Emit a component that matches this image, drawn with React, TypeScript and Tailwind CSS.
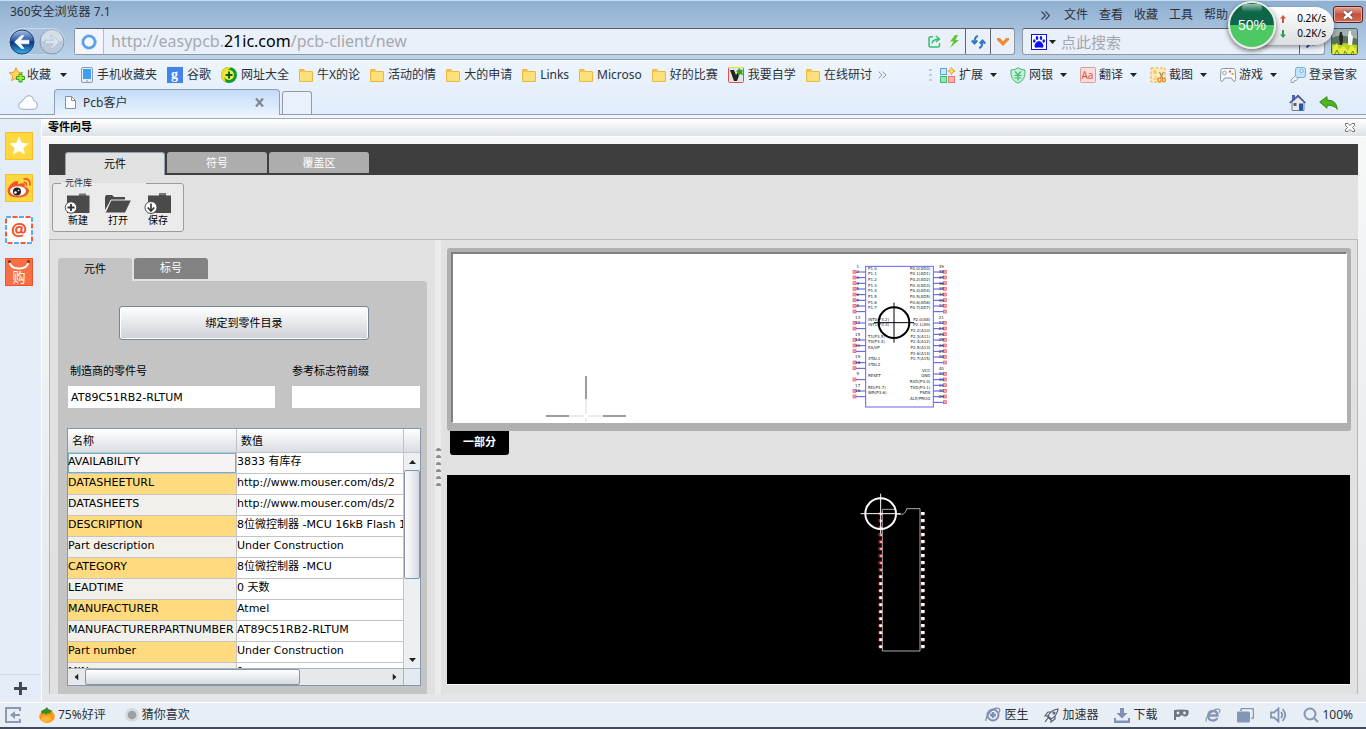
import { ReactNode } from "react";

type childrenProps = {
   children?: ReactNode;
}

const bookmarks = [
   { label: "牛X的论", icon: "folder" },
   { label: "活动的情", icon: "folder" },
   { label: "大的申请", icon: "folder" },
   { label: "Links", icon: "folder" },
   { label: "Microso", icon: "folder" },
   { label: "好的比赛", icon: "folder" },
   { label: "我要自学", icon: "plant" },
   { label: "在线研讨", icon: "folder" },
];

const rows = [
   ["AVAILABILITY", "3833 有库存"],
   ["DATASHEETURL", "http://www.mouser.com/ds/2"],
   ["DATASHEETS", "http://www.mouser.com/ds/2"],
   ["DESCRIPTION", "8位微控制器 -MCU 16kB Flash 1"],
   ["Part description", "Under Construction"],
   ["CATEGORY", "8位微控制器 -MCU"],
   ["LEADTIME", "0 天数"],
   ["MANUFACTURER", "Atmel"],
   ["MANUFACTURERPARTNUMBER", "AT89C51RB2-RLTUM"],
   ["Part number", "Under Construction"],
   ["MIN", "1"],
];

// [label, y]
const leftPins: [string, number][] = [
   ["P1.0", 54], ["P1.1", 71], ["P1.2", 88], ["P1.3", 105], ["P1.4", 122], ["P1.5", 139], ["P1.6", 156], ["P1.7", 173],
   ["INT0(P3.2)", 207], ["INT1(P3.3)", 224],
   ["T1(P3.5)", 258], ["T0(P3.4)", 275], ["EA/VP", 292],
   ["XTAL1", 326], ["XTAL2", 343], ["RESET", 377], ["RD(P3.7)", 411], ["WR(P3.6)", 428],
];
const rightPins: [string, number][] = [
   ["P0.0(AD0)", 54], ["P0.1(AD1)", 71], ["P0.2(AD2)", 88], ["P0.3(AD3)", 105], ["P0.4(AD4)", 122], ["P0.5(AD5)", 139],
   ["P0.6(AD6)", 156], ["P0.7(AD7)", 173], ["P2.0(A8)", 207], ["P2.1(A9)", 224], ["P2.2(A10)", 241], ["P2.3(A11)", 258],
   ["P2.4(A12)", 275], ["P2.5(A13)", 292], ["P2.6(A14)", 309], ["P2.7(A15)", 326], ["VCC", 360], ["GND", 377],
   ["RXD(P3.0)", 394], ["TXD(P3.1)", 411], ["PSEN", 428], ["ALE/PROG", 445],
];
const leftNumbers: [string, number][] = [["1", 49], ["2", 66], ["3", 83], ["4", 100], ["5", 117], ["6", 134], ["7", 151], ["8", 168],
   ["13", 202], ["12", 219], ["15", 253], ["14", 270], ["31", 287], ["19", 321], ["18", 338], ["9", 372], ["17", 406], ["16", 423]];
const rightNumbers: [string, number][] = [["39", 49], ["38", 66], ["37", 83], ["36", 100], ["35", 117], ["34", 134], ["33", 151], ["32", 168],
   ["21", 202], ["22", 219], ["23", 236], ["24", 253], ["25", 270], ["26", 287], ["27", 304], ["28", 321],
   ["40", 355], ["20", 372], ["10", 389], ["11", 406], ["30", 423], ["29", 440]];

const Caret = ({ className = "" }: { className?: string }) => (
   <svg width="7" height="4" viewBox="0 0 7 4" className={className}><path d="M0 0h7L3.5 4z" fill="#222" /></svg>
)

const Folder = () => (
   <svg width="14" height="13" viewBox="0 0 14 13" className="shrink-0">
      <path d="M.5 12.5V1Q.5.5 1 .5h4l1.500 2h6.500q.5 0 .5.500v9.500z" fill="#fbe07c" stroke="#eeb63c" />
      <path d="M1 1h4l1 2H1z" fill="#f5c644" />
   </svg>
)

const PlantIcon = () => (
   <svg width="16" height="16" viewBox="0 0 16 16" className="shrink-0">
      <rect x=".5" y=".5" width="15" height="15" rx="1" fill="#e4e4e4" stroke="#d9534f" />
      <path d="M1 .5h14" stroke="#e6e03c" />
      <path d="M2 3h4l2 5 2-3 2 1-3 8H6z" fill="#222" />
      <path d="M8 4l2-1 1-2 2 2 2 0-1 2 1 3-3-1-2 2 0-3z" fill="#32a516" />
   </svg>
)

const Bookmark = ({ icon, label }: { icon: ReactNode; label: string }) => (
   <a href="#" className="flex items-center gap-1 whitespace-nowrap">{icon}<span>{label}</span></a>
)

const Tool = ({ icon, label, last }: { icon: ReactNode; label: string; last?: boolean }) => (
   <button className={`flex items-center gap-[3px] whitespace-nowrap ${last ? "" : "w-[70px]"}`}>
      {icon}<span>{label}</span>{!last && <Caret className="ml-1" />}
   </button>
)

const TitleBar = () => (
   <div className="flex h-7 justify-between border-t border-[#c9dbec] pl-[10px] pr-[3px]">
      <h1 className="mt-[3px] leading-4">360安全浏览器 7.1</h1>
      <div className="flex items-start">
         <nav className="mr-[105px] mt-[6px] flex gap-[11px] leading-4">
            <button aria-label="更多" className="mr-[3px]">
               <svg width="9" height="9" viewBox="0 0 9 9" fill="none" stroke="#3b4856" strokeWidth="1.200"><path d="M.5.5l4 4-4 4M4.500.5l4 4-4 4" /></svg>
            </button>
            <a href="#">文件</a>
            <a href="#">查看</a>
            <a href="#">收藏</a>
            <a href="#">工具</a>
            <a href="#">帮助</a>
         </nav>
         <button aria-label="关闭" className="mt-[5px] flex h-[17px] w-[30px] items-center justify-center rounded-[3px] border border-[#571f1e] bg-linear-to-b from-[#e0a293] via-[#c9503c] to-[#cf6a51] shadow-[inset_0_0_0_1px_#e9b0a4]">
            <svg width="12" height="10" viewBox="0 0 12 10"><path d="M2 1.500l8 7M10 1.500l-8 7" stroke="#5c4a4e" strokeWidth="4" /><path d="M2 1.500l8 7M10 1.500l-8 7" stroke="#fff" strokeWidth="2.400" /></svg>
         </button>
      </div>
   </div>
)

const AddressBar = () => (
   <div className="flex h-[31px] pl-[9px] pr-2">
      <div className="mr-[9px] flex h-[27px] w-14 items-center justify-between rounded-full bg-[#a9c2dc] shadow-[inset_0_0_0_1px_#c5d8ea]">
         <button aria-label="后退">
            <svg width="26" height="26" viewBox="0 0 26 26">
               <defs>
                  <linearGradient id="back" x1="0" y1="0" x2="0" y2="1">
                     <stop offset="0" stopColor="#a9c1e6" /><stop offset=".45" stopColor="#2358a8" />
                     <stop offset=".5" stopColor="#0a2d77" /><stop offset="1" stopColor="#35b6f4" />
                  </linearGradient>
               </defs>
               <circle cx="13" cy="13" r="12" fill="url(#back)" stroke="#27416f" />
               <path d="M5.500 13l7-6.500h2.500L11.500 11.200H20v3.600h-8.500L15 19.500h-2.500z" fill="#fff" stroke="#fff" strokeWidth=".6" />
            </svg>
         </button>
         <button aria-label="前进">
            <svg width="26" height="26" viewBox="0 0 26 26">
               <circle cx="13" cy="13" r="12" fill="#bccbdb" stroke="#8499ae" />
               <path d="M2 12a11 11 0 0 1 22 0z" fill="#d3dee9" />
               <path d="M20.500 13l-7-6.500H11l3.500 4.700H6v3.600h8.500L11 19.500h2.500z" fill="#dbe4ec" stroke="#adbccb" strokeWidth=".7" />
            </svg>
         </button>
      </div>
      <div className="flex h-[27px] flex-1 items-stretch rounded-[3px] border border-[#8f98a4] border-t-[#555c68] bg-[#eaf0f9]">
         <div className="flex w-[29px] items-center justify-center border-r border-[#b3bcc8] bg-[#f2f6fc]">
            <svg width="16" height="16" viewBox="0 0 16 16"><circle cx="8" cy="8" r="6" fill="#f4f8fd" stroke="#5a9ee2" strokeWidth="2.600" /><circle cx="8" cy="8" r="7.400" fill="none" stroke="#8ec1f1" strokeDasharray="2 2" /></svg>
         </div>
         <div role="textbox" aria-label="地址" className="flex-1 pl-[7px] text-[16px] leading-[25px] text-[#a6a9ae]">
            http://easypcb.<span className="text-black">21ic.com</span>/pcb-client/new
         </div>
         <button aria-label="分享" className="flex w-[18px] items-center justify-center">
            <svg width="13" height="13" viewBox="0 0 13 13" fill="none" stroke="#34be6c" strokeWidth="1.500"><path d="M5 1.700H2.500Q1 1.700 1 3v7.500Q1 12 2.500 12h7.500q1.500 0 1.500-1.500V8M4 8.500Q4.500 4.500 11 4M8 1l3.500 3L8 7" /></svg>
         </button>
         <button aria-label="极速模式" className="flex w-[22px] items-center justify-center">
            <svg width="11" height="13" viewBox="0 0 11 13"><path d="M6 0L1 6.500h3.500L1 13l9-8H6.500L9 0z" fill="#66c431" /></svg>
         </button>
         <button aria-label="刷新" className="flex w-[25px] items-center justify-center border-l border-[#5f6672]">
            <svg width="15" height="14" viewBox="0 0 15 14" fill="none" stroke="#3578bd" strokeWidth="2"><path d="M7 1Q3.500 1.500 3.500 8M.8 5.500L3.500 8.500 6.300 5.500M8 13q3.500-.5 3.500-7M8.700 8.500l2.800-3 2.800 3" /></svg>
         </button>
         <button aria-label="展开" className="flex w-[24px] items-center justify-center border-l border-[#5f6672]">
            <svg width="12" height="8" viewBox="0 0 12 8"><path d="M0 0h3l3 3.500L9 0h3v2L6 8 0 2z" fill="#f08b34" /></svg>
         </button>
      </div>
      <form className="ml-[7px] flex h-[27px] w-[303px] items-center rounded-[3px] border border-[#8f98a4] border-t-[#555c68] bg-[#eaf0f9] pl-2">
         <svg width="16" height="16" viewBox="0 0 16 16"><rect x=".5" y=".5" width="15" height="15" fill="#fff" stroke="#1010f0" /><path d="M8 7c2 0 4.500 3 4.500 5 0 2.500-2.500 1.500-4.500 1.500s-4.500 1-4.500-1.500c0-2 2.500-5 4.500-5z" fill="#1010f0" /><g fill="#1010f0"><ellipse cx="3.300" cy="7" rx="1.300" ry="1.800" /><ellipse cx="6" cy="4" rx="1.300" ry="1.900" /><ellipse cx="10" cy="4" rx="1.300" ry="1.900" /><ellipse cx="12.700" cy="7" rx="1.300" ry="1.800" /></g></svg>
         <Caret className="ml-[2px]" />
         <input aria-label="搜索" placeholder="点此搜索" className="ml-[5px] min-w-0 flex-1 bg-transparent text-[15px] leading-5 outline-none placeholder:text-[#a3a7ad]" />
         <button aria-label="搜索" className="flex h-full w-[25px] items-center justify-center border-l border-[#5f6672]">
            <svg width="14" height="14" viewBox="0 0 14 14" fill="none" stroke="#2f5f9b" strokeWidth="2"><circle cx="8.500" cy="5.500" r="4" /><path d="M5.500 8.500l-4 4" /></svg>
         </button>
      </form>
      <svg width="27" height="27" viewBox="0 0 27 27" className="ml-[6px] shrink-0">
         <rect x=".5" y=".5" width="26" height="26" rx="2" fill="#9fb0b3" stroke="#525c68" />
         <path d="M1 10q8-5 25 1v6H1z" fill="#5a7358" />
         <path d="M1 16l6 1 6-2 13 2v9H1z" fill="#b9cf25" />
         <path d="M2 19l4-4 2 6 5-3 4 5 3-6 5 4v5H2z" fill="#e6ee3a" />
         <path d="M4 26l2-4 2 4M13 26l1-3 2 3M20 26l2-3 1 3" stroke="#6f8a2d" fill="none" />
         <path d="M9 4h2v2l1 2v5l-1 4H9l-1-8z" fill="#262a26" /><path d="M18 3h2v3l2 3-1 8h-4V8z" fill="#f4f4ef" />
      </svg>
   </div>
)

const Bookmarks = () => (
   <div className="flex h-7 items-center justify-between pl-[9px] pr-[9px] leading-4">
      <div className="flex items-center gap-[10px]">
         <button className="mr-1 flex items-center gap-[2px] whitespace-nowrap">
            <svg width="16" height="16" viewBox="0 0 16 16">
               <path d="M7 .8l2 4.300 4.700.6-3.400 3.200.9 4.700L7 11.300 2.800 13.600l.9-4.700L.4 5.700l4.700-.6z" fill="#ffd75e" stroke="#e79a2c" />
               <path d="M10 7h3v2.500h2.500v3H13V15h-3v-2.500H7.500v-3H10z" fill="#a0ea3b" stroke="#349b16" />
            </svg>
            <span>收藏</span><Caret className="ml-[7px]" />
         </button>
         <Bookmark label="手机收藏夹" icon={
            <svg width="12" height="16" viewBox="0 0 12 16"><rect x=".5" y=".5" width="11" height="15" rx="1.500" fill="#e9eef4" stroke="#8b9bb0" /><rect x="2" y="2" width="8" height="10" fill="#3ba0f3" /><path d="M5 14h2" stroke="#8b9bb0" /></svg>
         } />
         <Bookmark label="谷歌" icon={
            <svg width="16" height="16" viewBox="0 0 16 16"><rect width="16" height="16" fill="#4283f0" /><text x="4" y="12" fontSize="14" fontWeight="bold" fill="#fff" fontFamily="Liberation Serif, serif">g</text></svg>
         } />
         <Bookmark label="网址大全" icon={
            <svg width="16" height="16" viewBox="0 0 16 16"><circle cx="8" cy="8" r="8" fill="#0d9a2e" /><path d="M0 8a8 8 0 0 1 11-7.400Q5 3 4 8t1 7.400Q0 13 0 8z" fill="#f7d92b" /><circle cx="8" cy="8" r="5" fill="#f9ee3a" /><path d="M8 4.500v7M4.500 8h7" stroke="#06642a" strokeWidth="2.200" /></svg>
         } />
         {bookmarks.map((b) => (
            <Bookmark key={b.label} label={b.label} icon={b.icon === "folder" ? <Folder /> : <PlantIcon />} />
         ))}
         <svg width="9" height="8" viewBox="0 0 9 8" fill="none" stroke="#8c97a5" className="-ml-1"><path d="M.5.5L4 4 .5 7.500M4.500.5L8 4 4.500 7.500" /></svg>
      </div>
      <div className="flex items-center">
         <svg width="3" height="13" viewBox="0 0 3 13" fill="#c3cbd5" className="mr-2"><path d="M0 0h3v2H0zM0 5h3v2H0zM0 10h3v2H0z" /></svg>
         <Tool label="扩展" icon={
            <svg width="16" height="16" viewBox="0 0 16 16"><rect x=".5" y="1.500" width="6" height="6" fill="#cde6fa" stroke="#5aa4d8" /><rect x=".5" y="9.500" width="6" height="6" fill="#8cebb0" stroke="#42b873" /><rect x="8.500" y="9.500" width="6" height="6" fill="#f9b4ae" stroke="#e2786e" /><path d="M11.500.5l1.200 2.300L15 4l-2.300 1.200L11.500 7.500l-1.200-2.300L8 4l2.300-1.200z" fill="#ffe27a" stroke="#f09a22" /></svg>
         } />
         <Tool label="网银" icon={
            <svg width="16" height="17" viewBox="0 0 16 17" fill="none" stroke="#42b873"><path d="M8 .7Q10.500 3 15 3 16 13 8 16.300 0 13 1 3 5.500 3 8 .7z" fill="#c5f3d8" /><path d="M5 4.500l3 3.500 3-3.500M4.500 8.500h7M4.500 11h7M8 8v5.500" strokeWidth="1.200" /></svg>
         } />
         <Tool label="翻译" icon={
            <svg width="16" height="16" viewBox="0 0 16 16"><rect x=".5" y=".5" width="15" height="15" rx="1" fill="#fcdcd8" stroke="#e39a92" /><text x="1.500" y="12" fontSize="10" fill="#d8443a" fontFamily="Open Sans, sans-serif">Aa</text></svg>
         } />
         <Tool label="截图" icon={
            <svg width="16" height="16" viewBox="0 0 16 16"><rect x="1" y="1" width="14" height="14" fill="#fdeeb9" stroke="#f0a53a" strokeDasharray="3 1.500" /><circle cx="5" cy="5" r="2" fill="#fbc96a" /><path d="M2 13l4-5 3 5z" fill="#fbd591" /><path d="M9.500 5l3.500 7M13.500 5L10 12" stroke="#a0886a" strokeWidth="1.200" /><circle cx="9.500" cy="13" r="1.800" fill="none" stroke="#f08b1d" strokeWidth="1.300" /><circle cx="13.800" cy="13" r="1.600" fill="none" stroke="#f08b1d" strokeWidth="1.300" /></svg>
         } />
         <Tool label="游戏" icon={
            <svg width="16" height="14" viewBox="0 0 16 14"><path d="M2.500.5h11q1.500 0 1.700 2l.4 9q0 2-1.600 2Q13 13.500 11.500 10h-7Q3 13.500 2 13.500q-1.700 0-1.600-2l.4-9q.2-2 1.700-2z" fill="#f7f8fa" stroke="#8d96a3" /><circle cx="4.500" cy="5" r="1.800" fill="none" stroke="#9aa2ad" /><path d="M9 2.500h2v2H9z" fill="#e05d4e" /><path d="M11.500 5h2v2h-2z" fill="#e8a52e" /></svg>
         } />
         <Tool last label="登录管家" icon={
            <svg width="16" height="16" viewBox="0 0 16 16"><path d="M6 8L1 13v2.500h3l.5-2h2l2-3z" fill="#eef0f3" stroke="#9aa5b3" /><path d="M7 .5h6.500q2 0 2 2v6q0 2-2 2H8q-2.500 0-2.500-2V3Q5.500.5 7 .5z" fill="#c3e3fb" stroke="#75aede" /><circle cx="11.500" cy="4" r="1.600" fill="#f5fafe" stroke="#75aede" /></svg>
         } />
      </div>
   </div>
)

const BrowserTabs = () => (
   <div className="flex h-[26px] items-end justify-between border-b border-[#8e9cb4] pl-[18px] pr-7">
      <div className="flex items-end">
         <svg width="20" height="15" viewBox="0 0 20 15" className="mb-1 mr-4"><path d="M5 14.300Q.7 14.300.7 10.500.7 7.500 3.700 7 3.700 4.500 6 4.200 7.500.7 11 .7q4 0 4.500 4.800 3.800.8 3.800 4.500 0 4.300-4.300 4.300z" fill="#fbfdff" stroke="#a5abb5" /></svg>
         <div className="-mb-px flex h-[26px] w-[226px] items-center rounded-t-[4px] border border-b-0 border-[#8e9cb4] bg-linear-to-b from-[#c3dcf8] to-[#eaf3fd] pl-[10px] pr-[15px]">
            <svg width="11" height="13" viewBox="0 0 11 13"><path d="M.5.500h6l4 4v8H.5z" fill="#fcfdfe" stroke="#888f99" /><path d="M6.500.5v4h4" fill="none" stroke="#888f99" /></svg>
            <span className="ml-[7px] flex-1 leading-4">Pcb客户</span>
            <button aria-label="关闭标签页">
               <svg width="9" height="9" viewBox="0 0 9 9" stroke="#7f8690" strokeWidth="2.200"><path d="M1 .5l7 8M8 .5l-7 8" /></svg>
            </button>
         </div>
         <button aria-label="新标签页" className="ml-[2px] h-[23px] w-[30px] rounded-t-[3px] border border-b-0 border-[#959ba6] bg-[#e9f2fc]" />
      </div>
      <div className="flex items-center gap-[13px] pb-[3px]">
         <button aria-label="主页">
            <svg width="17" height="17" viewBox="0 0 17 17"><path d="M3 8v8.500h12V8L9 3z" fill="#e7e9ec" stroke="#74808f" /><path d="M3 1h3v5H3z" fill="#4a64c8" /><path d="M.7 9L9 1.500 16.300 9" fill="none" stroke="#4a5490" strokeWidth="1.600" /><path d="M4.500 9h3v3h-3z" fill="#536071" /><path d="M10 9.500h4v7h-4z" fill="#1e5bab" /></svg>
         </button>
         <button aria-label="返回">
            <svg width="19" height="14" viewBox="0 0 19 14"><path d="M.7 6L8 .7V4q9.500 0 10.300 9.300Q15 9 8 9.200v3z" fill="#4fb523" stroke="#2f8a17" /></svg>
         </button>
      </div>
   </div>
)

const Arrow = ({ up }: { up?: boolean }) => (
   <svg width="6" height="8" viewBox="0 0 6 8" className={`-ml-[3px] ${up ? "" : "rotate-180"}`}><path d="M3 0l3 3.500H4V8H2V3.500H0z" fill={up ? "#e0503e" : "#2a9b55"} /></svg>
)

const SpeedBall = () => (
   <div className="absolute right-[32px] top-[1px] h-[48px] w-[106px]">
      <div className="absolute right-0 top-[6px] flex h-[38px] w-[76px] flex-col justify-center rounded-r-full bg-linear-to-b from-white to-[#dcdee1] pl-[25px] pr-[8px] font-['Noto_Sans'] text-[10px] leading-[15px] text-black shadow-[0_2px_4px_#0006]">
         <span className="flex items-center justify-between"><Arrow up />0.2K/s</span>
         <span className="flex items-center justify-between"><Arrow />0.2K/s</span>
      </div>
      <div className="absolute left-0 top-0 flex size-[48px] items-center justify-center rounded-full border-2 border-[#e7ebe9] bg-linear-to-b from-[#0d6647] from-50% to-[#4cc962] to-50% font-['Liberation_Sans'] text-[14px] text-white shadow-[0_2px_5px_#0008]">
         <i className="absolute left-[12px] top-[1px] h-[8px] w-[20px] rounded-full bg-linear-to-b from-white/60 to-white/0" />
         50%
      </div>
   </div>
)

const SideButton = ({ label, children }: childrenProps & { label: string }) => (
   <button aria-label={label} className="h-7 w-7"><svg width="28" height="28" viewBox="0 0 28 28">{children}</svg></button>
)

const SideBar = () => (
   <aside className="flex w-[42px] shrink-0 flex-col justify-between border-r border-white bg-[#e4ecf8]">
      <div className="flex flex-col gap-[14px] pl-[5px] pt-[13px]">
         <SideButton label="收藏">
            <rect x=".5" y=".5" width="27" height="27" fill="#ffd83f" stroke="#fbbf23" />
            <path d="M14 4.500l2.700 6.200 6.800.7-5.100 4.500 1.500 6.600L14 19l-5.900 3.500 1.500-6.600-5.100-4.500 6.800-.7z" fill="#fff" />
         </SideButton>
         <SideButton label="微博">
            <rect x=".5" y=".5" width="27" height="27" fill="#ffd83f" stroke="#fbbf23" />
            <path d="M2.500 17Q3 12 8 8.500q4-2.500 5-.5.5 1-.2 2.500 6-2.500 7 0 .3 1-.3 2.200Q24 14 24 17q-1 6-11 6.500Q3 23.500 2.500 17z" fill="#f4532b" />
            <ellipse cx="13" cy="17" rx="8" ry="4.800" fill="#fff" /><circle cx="12" cy="17.500" r="4" fill="#222" /><circle cx="10.500" cy="18.500" r="1.300" fill="#fff" /><circle cx="13.500" cy="16.500" r=".8" fill="#fff" />
            <path d="M18.500 5Q25.500 4 25 11.500M18.500 8.500q3.500-.5 3 3" fill="none" stroke="#f4532b" strokeWidth="1.700" />
         </SideButton>
         <SideButton label="邮箱">
            <rect width="28" height="28" fill="#fff" />
            <rect x="1" y="1" width="26" height="26" fill="none" stroke="#55aef5" strokeWidth="2" strokeDasharray="5 8" />
            <rect x="1" y="1" width="26" height="26" fill="none" stroke="#f4583f" strokeWidth="2" strokeDasharray="5 8" strokeDashoffset="-6.500" />
            <text x="14" y="20" fontSize="18" fontWeight="bold" textAnchor="middle" fill="#f4532b" fontFamily="Open Sans, sans-serif">@</text>
         </SideButton>
         <SideButton label="购物">
            <rect x=".5" y=".5" width="27" height="27" fill="#fb6f46" stroke="#e8552f" />
            <path d="M4.500 4q1 6.500 9.500 6.500T23.500 4" fill="none" stroke="#fff" strokeWidth="1.800" /><circle cx="4.500" cy="3.500" r="1.600" fill="#8c2f1b" /><circle cx="23.500" cy="3.500" r="1.600" fill="#8c2f1b" />
            <text x="14" y="24" fontSize="13" textAnchor="middle" fill="#fff" fontFamily="Noto Sans CJK SC, sans-serif">购</text>
         </SideButton>
      </div>
      <button aria-label="添加" className="flex h-[28px] items-center justify-center border-t border-[#d3dbe6]">
         <svg width="13" height="13" viewBox="0 0 13 13"><path d="M6.500 0v13M0 6.500h13" stroke="#44484f" strokeWidth="3" /></svg>
      </button>
   </aside>
)

const LibraryButton = ({ label, children }: childrenProps & { label: string }) => (
   <button className="flex w-10 flex-col items-center text-[10px] leading-[14px] text-black">
      <svg width="30" height="22" viewBox="0 0 30 22">{children}</svg>
      {label}
   </button>
)

const Library = () => (
   <fieldset className="h-[55px] w-[132px] rounded-[3px] border border-[#9b9b9b] bg-[#ebebeb] pl-[5px] pt-[3px]">
      <legend className="ml-[3px] w-[85px] pl-1 text-[9px] leading-3 text-[#333]">元件库</legend>
      <div className="flex">
         <LibraryButton label="新建">
            <path d="M4 3.500h12V2h7v1.500h3.500V21H4z" fill="#4a4a4a" /><path d="M16 1.500h7v2h-7z" fill="#777" />
            <circle cx="8" cy="15.500" r="5.700" fill="#fff" stroke="#4a4a4a" /><path d="M8 12v7M4.500 15.500h7" stroke="#333" strokeWidth="1.800" />
         </LibraryButton>
         <LibraryButton label="打开">
            <path d="M2 18V5l1-2h6l2 2h11v3H8z" fill="#4a4a4a" /><path d="M8 8h20l-6 12.500H2.500z" fill="#4a4a4a" /><path d="M2.500 20L8 8h20" fill="none" stroke="#ebebeb" strokeWidth="1" />
         </LibraryButton>
         <LibraryButton label="保存">
            <path d="M5 3.500h11V2h7v1.500h5V21H5z" fill="#4a4a4a" /><path d="M16 1h7v2h-7z" fill="#777" />
            <circle cx="8" cy="15.500" r="6" fill="#fff" stroke="#4a4a4a" /><path d="M8 11.500v7M4.700 15.500L8 19l3.300-3.500" stroke="#333" strokeWidth="1.600" fill="none" />
         </LibraryButton>
      </div>
   </fieldset>
)

const PropertyTable = () => (
   <div className="mb-2 flex min-h-0 flex-1 flex-col border border-[#8498a9] bg-white">
      <div className="flex min-h-0 flex-1">
         <div className="min-w-0 flex-1 overflow-hidden">
            <table className="w-full table-fixed border-separate border-spacing-0 text-left text-[11px] leading-4">
               <thead>
                  <tr className="h-6 bg-linear-to-b from-white to-[#d9dde2]">
                     <th className="w-[169px] border-b border-r border-[#bfc3c7] p-0 pl-1 pt-[2px] font-normal">名称</th>
                     <th className="border-b border-r border-[#bfc3c7] p-0 pl-1 pt-[2px] font-normal">数值</th>
                  </tr>
               </thead>
               <tbody>
                  {rows.map(([name, value], i) => (
                     <tr key={name} className="h-[21px]">
                        <td className={`h-[21px] overflow-hidden whitespace-nowrap border-b border-r border-[#c4c4c4] p-0 pb-[2px]
                           ${i === 0 ? "bg-[#f5f3f3] shadow-[inset_0_0_0_1px_#70b2c4]" : i % 2 ? "bg-[#ffda7f]" : "bg-[#f2f0eb]"}`}>{name}</td>
                        <td className="overflow-hidden whitespace-nowrap border-b border-r border-[#c4c4c4] p-0 pb-[2px]">{value}</td>
                     </tr>
                  ))}
               </tbody>
            </table>
         </div>
         <div className="flex w-4 flex-col bg-[#edf0f3]">
            <div className="h-6 border-b border-[#bfc3c7] bg-linear-to-b from-white to-[#d9dde2]" />
            <div className="flex h-[17px] items-center justify-center"><Caret className="rotate-180" /></div>
            <div className="h-[109px] rounded-[2px] border border-[#8495a5] bg-linear-to-r from-white to-[#d6dadf]" />
            <div className="mt-auto flex h-[17px] items-center justify-center"><Caret /></div>
         </div>
      </div>
      <div className="flex h-[17px] border-t border-[#a9b4be] bg-[#e6e9ec]">
         <div className="flex w-[17px] items-center justify-center"><Caret className="rotate-90" /></div>
         <div className="w-[215px] rounded-[2px] border border-[#8495a5] bg-linear-to-b from-white to-[#d6dadf]" />
         <div className="ml-auto flex w-[17px] items-center justify-center"><Caret className="-rotate-90" /></div>
         <div className="w-[17px] border-l border-[#a9b4be] bg-[#e4eaf1]" />
      </div>
   </div>
)

const PartPanel = () => (
   <section className="flex w-[385px] shrink-0 flex-col pl-2 pr-2 pt-[18px]">
      <div className="flex items-start gap-[2px]">
         <button className="h-[23px] w-[74px] rounded-t-[3px] bg-[#c4c4c4] pt-[2px]">元件</button>
         <button className="h-[21px] w-[74px] rounded-t-[3px] bg-[#828282] pt-[2px] text-white">标号</button>
      </div>
      <div className="flex min-h-0 flex-1 flex-col rounded-tr-[3px] bg-[#c4c4c4] pl-[9px] pr-[6px] pt-[25px]">
         <button className="h-[34px] w-[250px] shrink-0 self-center rounded-[3px] border border-[#748797] bg-linear-to-b from-white to-[#cdd1d6] pt-[2px] shadow-[inset_0_0_0_1px_#fff]">绑定到零件目录</button>
         <div className="mb-5 mt-6 flex justify-between gap-[17px]">
            <label className="flex-1 pl-px leading-4">
               <span className="block pb-[6px] pl-[2px]">制造商的零件号</span>
               <input defaultValue="AT89C51RB2-RLTUM" className="block h-[22px] w-full bg-white pl-[3px] outline-none" />
            </label>
            <label className="mr-px w-[128px] leading-4">
               <span className="block pb-[6px]">参考标志符前缀</span>
               <input className="block h-[22px] w-full bg-white pl-[3px] outline-none" />
            </label>
         </div>
         <PropertyTable />
      </div>
   </section>
)

const Schematic = () => (
   <svg width="150" height="166" viewBox="12 12 450 498" fontFamily="DejaVu Sans, sans-serif" fontSize="12" fill="#222">
      <rect x="134" y="49" width="203" height="422" fill="none" stroke="#6464f0" strokeWidth="3" />
      {leftPins.map(([name, y]) => <text key={name} x="141" y={y + 5}>{name}</text>)}
      {rightPins.map(([name, y]) => <text key={name} x="328" y={y + 5} textAnchor="end">{name}</text>)}
      {leftNumbers.map(([n, y]) => (
         <g key={n}>
            <path d={`M98 ${y + 17}h35`} stroke="#5050e6" strokeWidth="3" />
            <rect x="96" y={y + 12} width="9" height="9" fill="#f7a0ac" stroke="#ee5a68" strokeWidth="2" />
            <text x="110" y={y + 4} textAnchor="middle">{n}</text>
         </g>
      ))}
      {rightNumbers.map(([n, y]) => (
         <g key={n}>
            <path d={`M338 ${y + 17}h35`} stroke="#5050e6" strokeWidth="3" />
            <rect x="367" y={y + 12} width="9" height="9" fill="#f7a0ac" stroke="#ee5a68" strokeWidth="2" />
            <text x="361" y={y + 4} textAnchor="middle">{n}</text>
         </g>
      ))}
      <g fill="none" stroke="#000"><circle cx="219" cy="218" r="46" strokeWidth="6" /><path d="M219 158v120M159 218h120" strokeWidth="3" /></g>
   </svg>
)

const Footprint = () => (
   <svg width="110" height="209" viewBox="9 -15 330 627">
      {Array.from({ length: 20 }, (_, i) => (
         <g key={i}>
            <circle cx="118" cy={101 + i * 21} r="6" fill="#c81e1e" />
            <path d={i < 9 ? `M118 ${100 + i * 21}h5v4h-5z` : `M115 ${97 + i * 21}h9v8h-9z`} fill="#fff" />
            <path d={`M240 ${96 + i * 21}h11v9h-11z`} fill="#fff" />
            <path d={`M240 ${101 + i * 21}v5h9`} fill="none" stroke="#e04040" strokeWidth="2" />
         </g>
      ))}
      <path d="M124 88v425h113V86h-40q-4 17-16 17h-15M124 88h40" fill="none" stroke="#aaa" strokeWidth="3" />
      <g fill="none" stroke="#fff"><circle cx="119" cy="101" r="46" strokeWidth="6" /><path d="M119 41v120M59 101h120" strokeWidth="3" /></g>
   </svg>
)

const Preview = () => (
   <section className="flex min-w-0 flex-1 flex-col border-r border-[#b8b8b8] pb-[9px] pl-[6px] pr-[6px] pt-2">
      <div className="flex min-h-0 grow-[171] basis-0 flex-col rounded-[3px] bg-[#b0b0b0] px-1 pb-2 pt-1">
         <div className="relative flex flex-1 justify-center overflow-hidden border-2 border-b border-r border-[#808080] border-b-white border-r-white bg-white">
            <Schematic />
            <svg width="80" height="46" viewBox="0 0 80 46" className="absolute bottom-0 left-[93px]" strokeWidth="2">
               <path d="M40 0v23M0 40h23M57 40h23" stroke="#9c9c9c" /><path d="M40 23v15M40 42v4M23 40h15M42 40h15" stroke="#ececec" />
            </svg>
         </div>
      </div>
      <button className="ml-[3px] h-6 w-[59px] shrink-0 rounded-b-[3px] bg-black font-bold text-white">一部分</button>
      <div className="mr-px mt-5 flex min-h-0 grow-[209] basis-0 justify-center overflow-hidden border-b border-white bg-black">
         <Footprint />
      </div>
   </section>
)

const Wizard = () => (
   <main className="flex min-w-0 flex-1 flex-col bg-[#e3e7ea] font-['DejaVu_Sans','Noto_Sans_CJK_SC',sans-serif] text-[11px] text-black">
      <div className="flex h-[18px] items-center justify-between border-b border-white bg-linear-to-b from-white to-[#dde2e6] pl-[6px] pr-[11px]">
         <h2 className="font-bold leading-4">零件向导</h2>
         <button aria-label="关闭">
            <svg width="10" height="9" viewBox="0 0 10 9"><path d="M.5.500h2.500L5 2.500 7 .5h2.500v2L7.500 4.500l2 2v2H7L5 6.500 3 8.500H.5v-2l2-2-2-2z" fill="#fafafa" stroke="#777" /></svg>
         </button>
      </div>
      <div className="flex min-h-0 flex-1 flex-col bg-linear-to-b from-[#f6f8f8] to-[#e3e7ea] pb-2 pl-[7px] pr-2 pt-[7px]">
         <div className="flex h-[31px] gap-[2px] bg-[#3e3e3e] pl-4 pt-2">
            <button className="h-[23px] w-[100px] rounded-t-[3px] border border-b-0 border-[#8fa3b5] bg-[#e1e1e1] pt-[2px]">元件</button>
            <button className="h-[21px] w-[100px] rounded-t-[3px] bg-[#adadad] pt-[3px] text-white">符号</button>
            <button className="h-[21px] w-[100px] rounded-t-[3px] bg-[#adadad] pt-[3px] text-white">覆盖区</button>
         </div>
         <div className="h-16 bg-[#e1e1e1] pl-[3px] pt-[2px]"><Library /></div>
         <div className="flex min-h-0 flex-1 border-l border-t border-[#b8b8b8] bg-[#e1e1e1]">
            <PartPanel />
            <div className="flex w-[6px] shrink-0 flex-col items-center justify-center gap-1 bg-[#ebebeb]">
               {[0, 1, 2, 3, 4, 5].map((dot) => <i key={dot} className="h-[3px] w-[5px] rounded-t-full bg-[#8c8c8c]" />)}
            </div>
            <Preview />
         </div>
      </div>
   </main>
)

const StatusBar = () => (
   <footer className="flex h-[27px] items-center justify-between border-b-2 border-t border-b-[#414b59] border-t-white bg-[#e8eef6] pl-[5px] pr-[13px] leading-4">
      <div className="flex items-center">
         <button aria-label="收起侧栏">
            <svg width="16" height="16" viewBox="0 0 16 16" fill="none" stroke="#8a98b2" strokeWidth="2"><path d="M15 4V1H1v14h14v-3" /><path d="M5 8l5-4v3h5v2h-5v3z" fill="#8a98b2" stroke="none" /></svg>
         </button>
         <a href="#" className="ml-[18px] flex items-center gap-[3px]">
            <svg width="16" height="16" viewBox="0 0 16 16"><ellipse cx="8" cy="9.500" rx="7.800" ry="6.500" fill="#f99a16" /><ellipse cx="7" cy="12" rx="5" ry="3" fill="#fdb53a" /><path d="M2 4l4-2 2-2 1 2 5 2-3 1 1 2-3-1-2 2-1-2-3 1z" fill="#398a20" /></svg>
            75%好评
         </a>
         <a href="#" className="ml-[19px] flex items-center gap-[3px]">
            <svg width="14" height="14" viewBox="0 0 14 14"><circle cx="7" cy="7" r="7" fill="#d6d9dd" /><circle cx="7" cy="7" r="4.300" fill="#9d9fa3" /></svg>
            猜你喜欢
         </a>
      </div>
      <div className="flex items-center gap-4 whitespace-nowrap">
         <button className="flex items-center gap-[3px]">
            <svg width="16" height="16" viewBox="0 0 16 16" fill="none" stroke="#7f90b0"><circle cx="8" cy="8" r="5.500" strokeWidth="2" /><path d="M8 5v6M5 8h6" strokeWidth="2.500" /><path d="M1 14Q.5 10 5 5T14 1.500q1.500 1 0 4" strokeWidth="1.300" /></svg>医生
         </button>
         <button className="flex items-center gap-[3px]">
            <svg width="15" height="15" viewBox="0 0 15 15" fill="none" stroke="#555f6e" strokeWidth="1.200"><path d="M4 8q3-6 10-7-1 7-7 10zM4 8H1l3-4h3M7 11v3l4-3V8M4 10l-3 4M3 8l4 4" /><circle cx="10" cy="5" r="1" /></svg>加速器
         </button>
         <button className="flex items-center gap-[3px]">
            <svg width="16" height="15" viewBox="0 0 16 15" fill="#8092b2"><path d="M6 0h4v5h3.500L8 10.500 2.500 5H6zM0 10h2v2.500h12V10h2v5H0z" /></svg>下载
         </button>
         <button aria-label="无痕">
            <svg width="16" height="12" viewBox="0 0 16 12"><path d="M1 1q7-1 14 0 1.500 2 0 5-1.500 2-4 1.500L9 6 6 8H3v3H1z" fill="#6e7684" /><circle cx="5" cy="4" r="1.400" fill="#e8eef6" /><circle cx="11.500" cy="4" r="1.400" fill="#e8eef6" /></svg>
         </button>
         <button aria-label="兼容模式">
            <svg width="16" height="15" viewBox="0 0 16 15" fill="none" stroke="#8496b5"><path d="M3.500 7.500h9Q12.500 3 8 3T3.200 8Q3.500 12.500 8 12.500q3 0 4.300-2.500" strokeWidth="2.400" /><path d="M1.500 13.500Q-.5 11 5 5.500T14.500 1.500Q15.500 3 14 5" strokeWidth="1.200" /></svg>
         </button>
         <button aria-label="窗口">
            <svg width="17" height="15" viewBox="0 0 17 15"><path d="M4 3V2q0-1.500 1.500-1.500h9.500Q16.500.5 16.500 2v7q0 1.500-2 1.500" fill="none" stroke="#8496b5" strokeWidth="1.500" /><rect y="3.500" width="13" height="11" rx="1.500" fill="#8496b5" /></svg>
         </button>
         <button aria-label="声音">
            <svg width="17" height="16" viewBox="0 0 17 16" fill="none" stroke="#8496b5" strokeWidth="1.800"><path d="M1 5.500h3L8.500 1.500v13L4 10.500H1zM11 5q2.500 3 0 6M12.500 2q5.500 6 0 12" /></svg>
         </button>
         <button className="flex items-center gap-[3px]">
            <svg width="16" height="16" viewBox="0 0 16 16" fill="none" stroke="#8496b5" strokeWidth="2"><circle cx="7" cy="7" r="5.500" /><path d="M11 11l4 4" /></svg>100%
         </button>
      </div>
   </footer>
)

export default function App() {
   return (
      <div className="relative flex h-screen flex-col overflow-hidden bg-[#e1edfa] font-['Noto_Sans','Noto_Sans_CJK_SC',sans-serif] text-[12px] text-[#2c3138]">
         <header>
            <div className="border-b border-[#8b9cb3] bg-linear-to-b from-[#8fafd0] to-[#bdd3ea]">
               <TitleBar />
               <AddressBar />
            </div>
            <div className="border-t border-white bg-linear-to-b from-[#edf4fd] to-[#dfecfa]">
               <Bookmarks />
               <BrowserTabs />
            </div>
            <div className="h-1 border-b border-[#a5a9b4] bg-[#f0f5fb]" />
         </header>
         <div className="flex min-h-0 flex-1">
            <SideBar />
            <Wizard />
         </div>
         <StatusBar />
         <SpeedBall />
      </div>
   )
}
